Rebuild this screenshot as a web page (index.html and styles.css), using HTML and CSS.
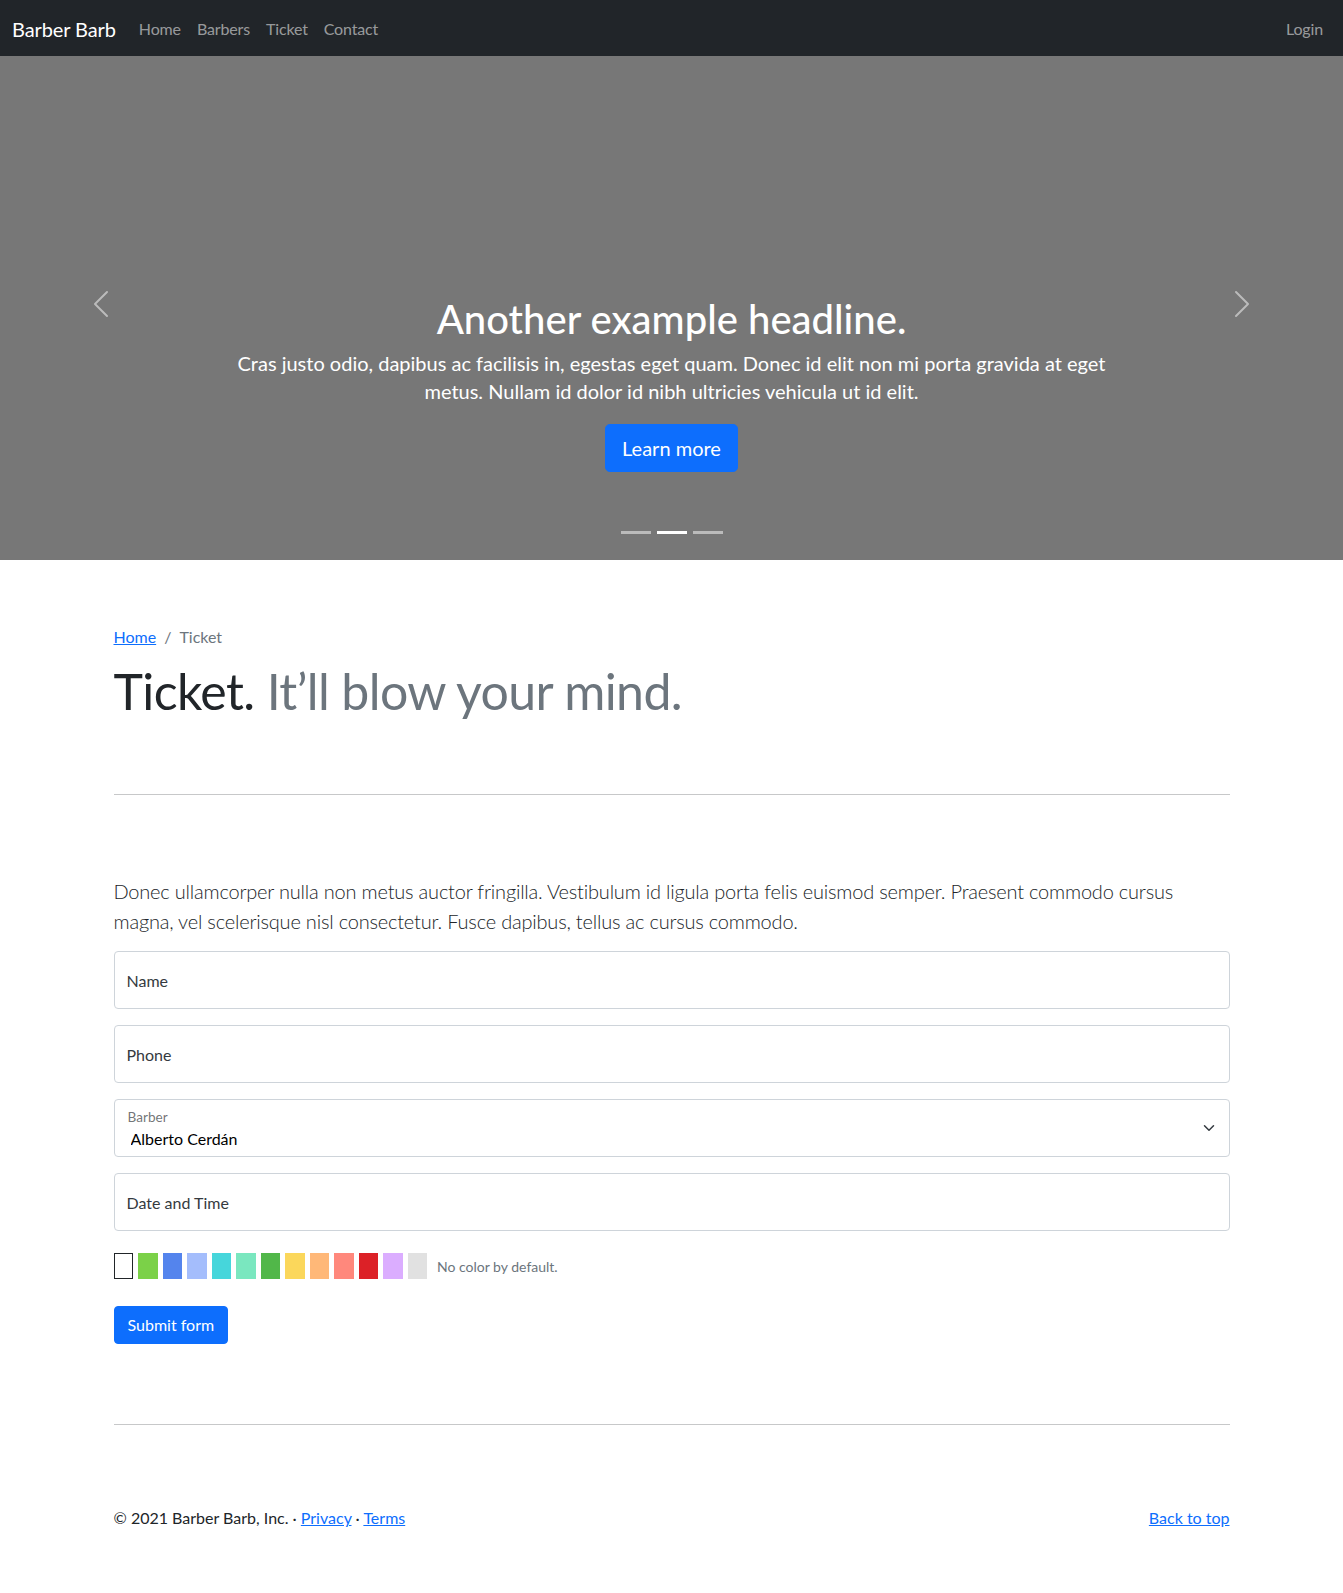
FILE: index.html
```html
<!DOCTYPE html>
<html lang="en">
<head>
<meta charset="utf-8">
<title>Barber Barb · Ticket</title>
<link rel="stylesheet" href="styles.css">
</head>
<body>
<header>
  <nav class="navbar">
    <a class="brand" href="#">Barber Barb</a>
    <ul class="nav-links">
      <li><a href="#">Home</a></li>
      <li><a href="#">Barbers</a></li>
      <li><a href="#">Ticket</a></li>
      <li><a href="#">Contact</a></li>
    </ul>
    <a class="nav-login" href="#">Login</a>
  </nav>
</header>

<main>
  <section class="carousel">
    <button class="control" type="button" aria-label="Previous">
      <svg viewBox="0 0 16 16" fill="#fff"><path d="M11.354 1.646a.5.5 0 0 1 0 .708L5.707 8l5.647 5.646a.5.5 0 0 1-.708.708l-6-6a.5.5 0 0 1 0-.708l6-6a.5.5 0 0 1 .708 0z"/></svg>
    </button>
    <div class="slide">
      <div class="caption">
        <h1>Another example headline.</h1>
        <p>Cras justo odio, dapibus ac facilisis in, egestas eget quam. Donec id elit non mi porta gravida at eget metus. Nullam id dolor id nibh ultricies vehicula ut id elit.</p>
        <div class="caption-action"><a class="btn btn-lg" href="#">Learn more</a></div>
      </div>
      <div class="indicators">
        <span></span><span class="active"></span><span></span>
      </div>
    </div>
    <button class="control" type="button" aria-label="Next">
      <svg viewBox="0 0 16 16" fill="#fff"><path d="M4.646 1.646a.5.5 0 0 1 .708 0l6 6a.5.5 0 0 1 0 .708l-6 6a.5.5 0 0 1-.708-.708L10.293 8 4.646 2.354a.5.5 0 0 1 0-.708z"/></svg>
    </button>
  </section>

  <div class="container">
    <ol class="breadcrumb">
      <li><a href="#">Home</a></li>
      <li class="active">Ticket</li>
    </ol>
    <h2 class="featurette-heading">Ticket. <span class="text-muted">It’ll blow your mind.</span></h2>

    <hr class="divider divider-top">

    <p class="lead">Donec ullamcorper nulla non metus auctor fringilla. Vestibulum id ligula porta felis euismod semper. Praesent commodo cursus magna, vel scelerisque nisl consectetur. Fusce dapibus, tellus ac cursus commodo.</p>

    <form class="ticket-form">
      <input class="field" type="text" placeholder="Name">
      <input class="field" type="tel" placeholder="Phone">
      <div class="select-field">
        <label for="barber">Barber</label>
        <select id="barber">
          <option>Alberto Cerdán</option>
        </select>
        <svg viewBox="0 0 16 16" width="16" height="12"><path fill="none" stroke="#343a40" stroke-linecap="round" stroke-linejoin="round" stroke-width="2" d="M2 5l6 6 6-6"/></svg>
      </div>
      <input class="field" type="text" placeholder="Date and Time">

      <div class="swatches">
        <span class="swatch none"></span>
        <span class="swatch c1"></span>
        <span class="swatch c2"></span>
        <span class="swatch c3"></span>
        <span class="swatch c4"></span>
        <span class="swatch c5"></span>
        <span class="swatch c6"></span>
        <span class="swatch c7"></span>
        <span class="swatch c8"></span>
        <span class="swatch c9"></span>
        <span class="swatch c10"></span>
        <span class="swatch c11"></span>
        <span class="swatch c12"></span>
        <span class="swatch-note">No color by default.</span>
      </div>

      <button class="btn submit" type="submit">Submit form</button>
    </form>

    <hr class="divider">
  </div>
</main>

<footer class="container footer">
  <p>© 2021 Barber Barb, Inc. · <a href="#">Privacy</a> · <a href="#">Terms</a></p>
  <p><a href="#">Back to top</a></p>
</footer>
</body>
</html>
```

FILE: styles.css
```css
* { box-sizing: border-box; }

body {
  margin: 0;
  padding: 48px 0 48px;
  font-family: "Lato", "Liberation Sans", sans-serif;
  font-size: 16px;
  line-height: 1.5;
  color: #212529;
  background: #fff;
}

a { color: #0d6efd; }

/* Navbar */
.navbar {
  position: fixed;
  top: 0;
  left: 0;
  right: 0;
  z-index: 10;
  height: 56px;
  display: flex;
  align-items: center;
  padding: 9px 12px 7px;
  background: #212529;
}
.brand {
  font-size: 20px;
  line-height: 30px;
  padding: 5px 0;
  margin-right: 15px;
  letter-spacing: -.1px;
  color: #fff;
  text-decoration: none;
}
.nav-links {
  display: flex;
  flex: 1;
  list-style: none;
  margin: 0;
  padding: 0;
}
.nav-links a,
.nav-login {
  display: block;
  padding: 8px;
  line-height: 24px;
  letter-spacing: -.15px;
  color: rgba(255, 255, 255, .55);
  text-decoration: none;
}

/* Carousel */
.carousel {
  display: grid;
  grid-template-columns: 15% 1fr 15%;
  height: 512px;
  margin-bottom: 64px;
  background: #777;
}
.control {
  display: flex;
  align-items: center;
  justify-content: center;
  padding: 0;
  border: 0;
  background: none;
  opacity: .5;
  cursor: pointer;
}
.control svg { width: 32px; height: 32px; }
.slide {
  display: flex;
  flex-direction: column;
  justify-content: flex-end;
  color: #fff;
  text-align: center;
}
.caption { padding: 20px 0; }
.caption h1 {
  margin: 0 0 6px;
  font-size: 40px;
  font-weight: 500;
  line-height: 1.2;
}
.caption p {
  margin: 0 0 19px;
  padding: 0 22px;
  font-size: 20px;
  line-height: 1.4;
}
.caption-action {
  display: flex;
  justify-content: center;
  margin-bottom: 20px;
}
.indicators {
  display: flex;
  justify-content: center;
  margin: 9px 0 16px;
}
.indicators span {
  width: 30px;
  height: 3px;
  margin: 10px 3px;
  background: #fff;
  opacity: .5;
}
.indicators .active { opacity: 1; }

/* Buttons */
.btn {
  display: inline-block;
  padding: 6px 12px;
  font: inherit;
  font-size: 16px;
  line-height: 24px;
  color: #fff;
  background: #0d6efd;
  border: 1px solid #0d6efd;
  border-radius: 4px;
  text-decoration: none;
  cursor: pointer;
}
.btn-lg {
  padding: 8px 16px;
  font-size: 20px;
  line-height: 30px;
  border-radius: 4.8px;
}
.submit {
  align-self: flex-start;
  padding: 6px 13px;
}

/* Main */
.container {
  width: 1140px;
  margin: 0 auto;
  padding: 0 12px;
}
.breadcrumb {
  display: flex;
  list-style: none;
  margin: 0 0 16px;
  padding: 1px 0 0;
}
.breadcrumb li + li { padding-left: 8px; }
.breadcrumb li + li::before {
  content: "/";
  padding-right: 8px;
  color: #6c757d;
}
.breadcrumb .active { color: #6c757d; }

.featurette-heading {
  margin: 0 0 8px;
  padding-top: 1px;
  font-size: 50px;
  font-weight: 400;
  line-height: 1;
  letter-spacing: -.6px;
}
.text-muted { color: #6c757d; }

.divider {
  height: 1px;
  margin: 80px 0;
  border: 0;
  background: #212529;
  opacity: .25;
}
.divider-top { margin-top: 78px; }

.lead {
  margin: 0 0 16px;
  padding-top: 1px;
  font-size: 20px;
  font-weight: 300;
  line-height: 30px;
  letter-spacing: -.2px;
}
.lead + .ticket-form { margin-top: -1px; }

/* Form */
.ticket-form {
  display: flex;
  flex-direction: column;
}
.field {
  display: block;
  width: 100%;
  height: 58px;
  margin: 0 0 16px;
  padding: 16px 12px;
  font: inherit;
  font-size: 16px;
  line-height: 24px;
  color: #212529;
  background: #fff;
  border: 1px solid #ced4da;
  border-radius: 4px;
}
.field::placeholder { color: #343a40; opacity: 1; }

.select-field {
  display: grid;
  grid-template-columns: 1fr auto;
  grid-template-rows: 27px 24px 5px;
  height: 58px;
  margin-bottom: 16px;
  background: #fff;
  border: 1px solid #ced4da;
  border-radius: 4px;
}
.select-field label {
  grid-column: 1;
  grid-row: 1;
  margin-top: 7px;
  padding-left: 13px;
  font-size: 13.6px;
  line-height: 20px;
  color: rgba(33, 37, 41, .65);
}
.select-field select {
  grid-column: 1;
  grid-row: 2;
  appearance: none;
  -webkit-appearance: none;
  margin: 0;
  padding: 0 16px;
  font: inherit;
  font-size: 16px;
  line-height: 24px;
  color: #000;
  background: transparent;
  border: 0;
  outline: none;
}
.select-field svg {
  grid-column: 2;
  grid-row: 1 / -1;
  align-self: center;
  margin-right: 12px;
}

.swatches {
  display: flex;
  align-items: center;
  gap: 5px;
  margin: 6px 0 27px;
}
.swatch { width: 19.5px; height: 26px; }
.swatch.none { background: #fff; border: 1px solid #212529; }
.c1 { background: #7bd148; }
.c2 { background: #5484ed; }
.c3 { background: #a4bdfc; }
.c4 { background: #46d6db; }
.c5 { background: #7ae7bf; }
.c6 { background: #51b749; }
.c7 { background: #fbd75b; }
.c8 { background: #ffb878; }
.c9 { background: #ff887c; }
.c10 { background: #dc2127; }
.c11 { background: #dbadff; }
.c12 { background: #e1e1e1; }
.swatch-note {
  margin-left: 5px;
  padding-top: 1px;
  font-size: 14px;
  color: #6c757d;
}

/* Footer */
.footer {
  display: flex;
  justify-content: space-between;
}
.footer p { margin: 0 0 16px; padding-top: 1px; }
```
